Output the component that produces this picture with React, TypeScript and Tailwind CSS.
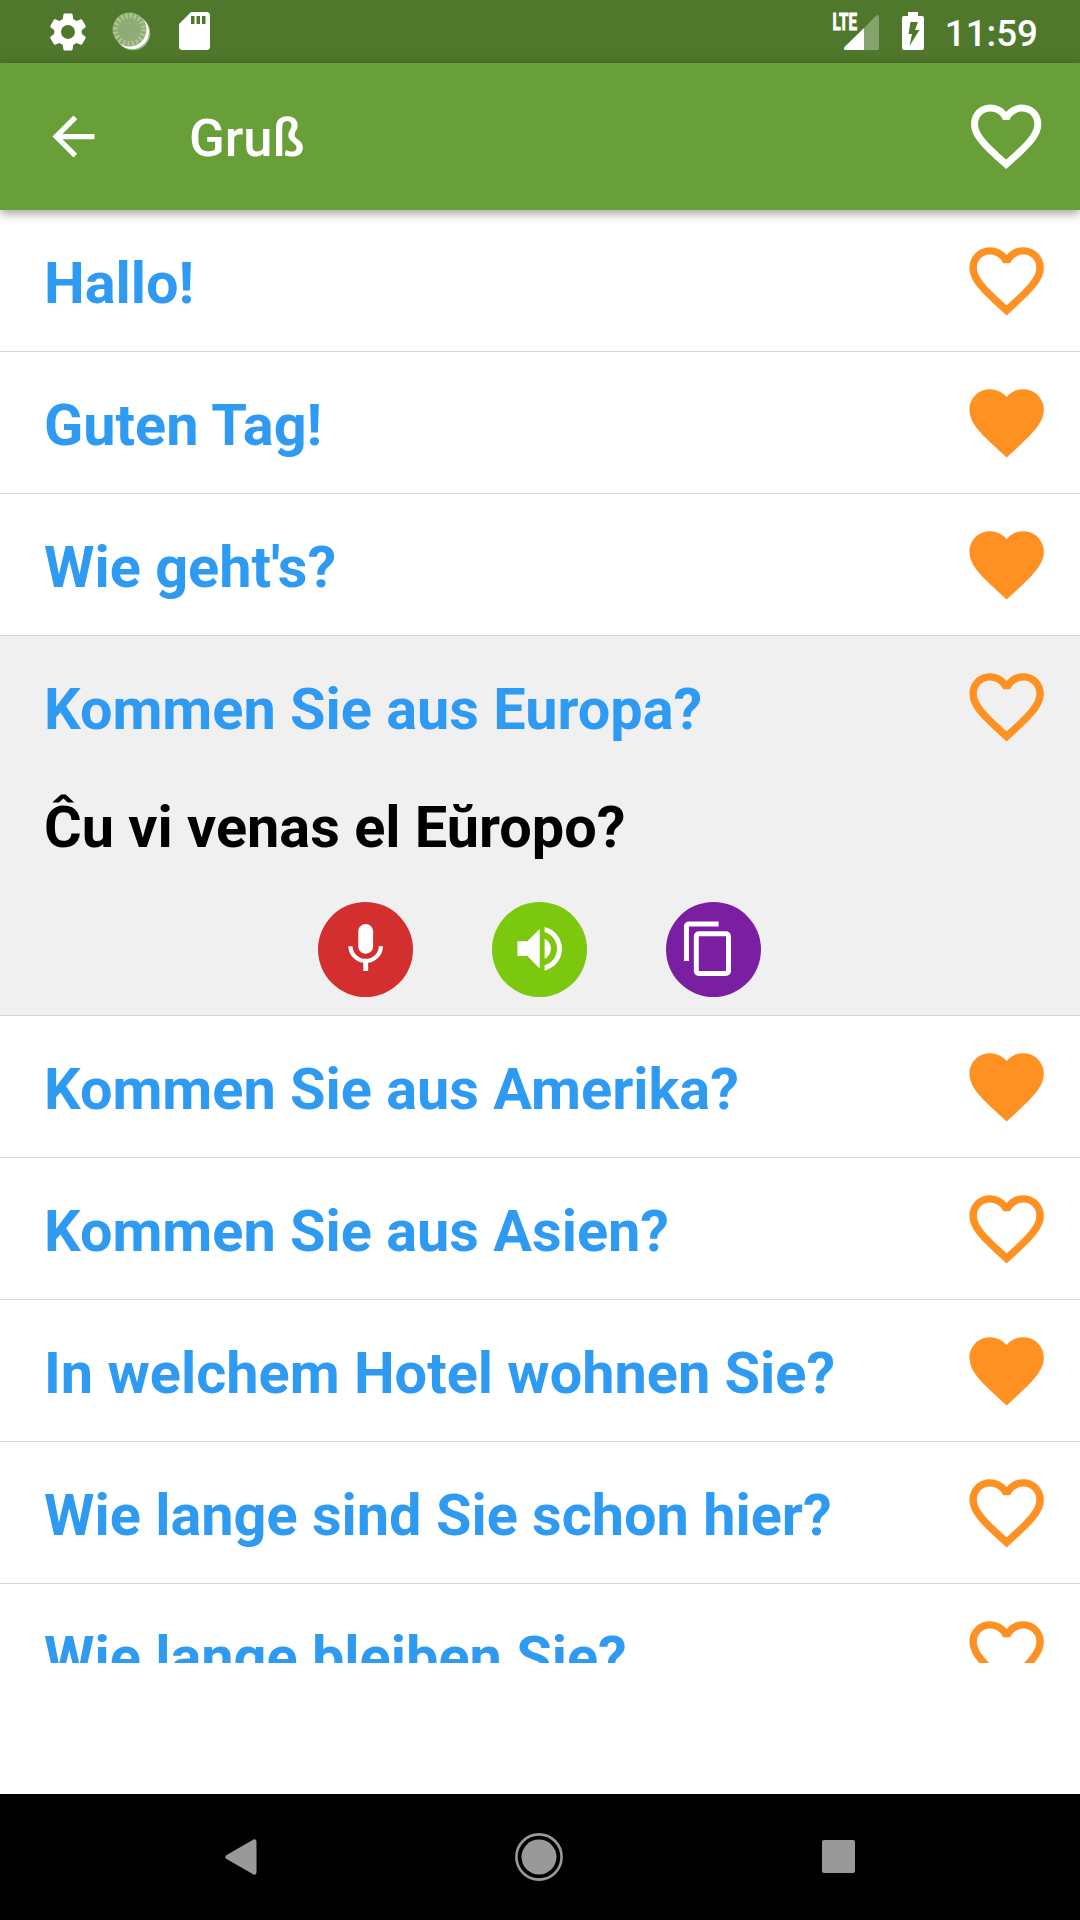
import { MdArrowBack, MdFavorite, MdFavoriteBorder, MdMic, MdVolumeUp, MdContentCopy, MdSettings } from "react-icons/md";

type Phrase = {
  text: string;
  favorite: boolean;
  translation?: string;
};

const PHRASES: Phrase[] = [
  { text: "Hallo!", favorite: false },
  { text: "Guten Tag!", favorite: true },
  { text: "Wie geht's?", favorite: true },
  { text: "Kommen Sie aus Europa?", favorite: false, translation: "Ĉu vi venas el Eŭropo?" },
  { text: "Kommen Sie aus Amerika?", favorite: true },
  { text: "Kommen Sie aus Asien?", favorite: false },
  { text: "In welchem Hotel wohnen Sie?", favorite: true },
  { text: "Wie lange sind Sie schon hier?", favorite: false },
  { text: "Wie lange bleiben Sie?", favorite: false },
];

function StatusBar() {
  return (
    <div className="flex h-[63px] shrink-0 items-center bg-[#50782c] pb-px pl-[45px] pr-[42px] text-white">
      <MdSettings className="mt-px h-[46px] w-[46px]" />
      <svg viewBox="0 0 40 40" className="ml-[21px] h-10 w-10">
        <circle cx="21" cy="22" r="17.3" fill="#9fb68b" />
        <circle cx="20" cy="21" r="17" fill="#fff" />
        <circle cx="17.500" cy="18.500" r="17" fill="#8fab78" />
        <circle cx="17.500" cy="18.500" r="14" fill="none" stroke="#b4c98f" strokeWidth="5" strokeDasharray="1.8 2.6" />
      </svg>
      <svg viewBox="0 0 31 38" className="ml-[27px] h-[38px] w-[31px]" fill="currentColor">
        <path fillRule="evenodd" d="M12 0h15.500a3.500 3.500 0 0 1 3.500 3.500v31a3.500 3.500 0 0 1-3.500 3.500h-24A3.500 3.500 0 0 1 0 34.500V12zM12 4v8h3.500V4zM17.500 4v8H21V4zM23 4v8h3.500V4z" />
      </svg>
      <div className="flex-1" />
      <svg viewBox="0 0 48 40" className="h-10 w-12 overflow-visible">
        <path d="M46 6v31a2 2 0 0 1-2 2H31V17L43 4.800Q46 2.500 46 6z" fill="#86a26d" />
        <path d="M31 17v22H13q-3.500-.500-1.500-3z" fill="#fff" />
        <text x="-0.500" y="19" textLength="24.500" lengthAdjust="spacingAndGlyphs" fill="#fff" stroke="#fff" strokeWidth="0.900" className="font-[Roboto] text-[23px] font-bold">LTE</text>
      </svg>
      <svg viewBox="0 0 22 38" className="ml-[21px] h-[38px] w-[22px]" fill="currentColor">
        <path fillRule="evenodd" d="M6 0h10v4h4a2 2 0 0 1 2 2v30a2 2 0 0 1-2 2H2a2 2 0 0 1-2-2V6a2 2 0 0 1 2-2h4zM8.500 10L6.500 22H10l-2.500 12L17.500 18H13l3-8z" />
      </svg>
      <span className="ml-[21px] mt-[6px] text-[36.75px] font-medium leading-none">11:59</span>
    </div>
  );
}

function AppBar() {
  return (
    <header className="relative z-10 flex h-[147px] shrink-0 items-center bg-[#689f38] pl-[42px] pr-[32px] text-white shadow-[0_3px_10px_rgba(0,0,0,0.4)]">
      <MdArrowBack className="h-[63px] w-[63px]" />
      <h1 className="ml-[84px] flex-1 pt-[4px] text-[52.500px] font-medium leading-none">Gruß</h1>
      <MdFavoriteBorder className="h-[84.400px] w-[84.400px]" />
    </header>
  );
}

function PhraseRow({ text, favorite, translation }: Phrase) {
  const Heart = favorite ? MdFavorite : MdFavoriteBorder;
  return (
    <li className={translation ? "border-b border-[#d5d5d5] bg-[#f0f0f0]" : "border-b border-[#d5d5d5] bg-white"}>
      <div className="flex h-[141px] items-center justify-between pl-[44px] pr-[29px]">
        <span className="whitespace-nowrap pt-[7px] text-[57.650px] font-bold leading-none text-[#2f9af2]">{text}</span>
        <Heart className="mt-px h-[89.250px] w-[89.250px] text-[#ff9122]" />
      </div>
      {translation && (
        <div className="h-[238px]">
          <p className="pl-[44px] pt-[22px] text-[57.650px] font-bold leading-[58px] text-black">{translation}</p>
          <div className="mt-[45px] flex justify-center gap-[79px] pr-[2px] text-white">
            <button className="flex h-[95px] w-[95px] items-center justify-center rounded-full bg-[#d32f2f]">
              <MdMic className="mb-px ml-px h-[59.400px] w-[59.400px]" />
            </button>
            <button className="flex h-[95px] w-[95px] items-center justify-center rounded-full bg-[#7cc80e]">
              <MdVolumeUp className="mb-px ml-px h-[59.400px] w-[59.400px]" />
            </button>
            <button className="flex h-[95px] w-[95px] items-center justify-center rounded-full bg-[#7b1fa2]">
              <MdContentCopy className="mb-px mr-[9px] h-[59.400px] w-[59.400px] shrink-0" />
            </button>
          </div>
        </div>
      )}
    </li>
  );
}

function NavBar() {
  return (
    <nav className="flex h-[126px] shrink-0 items-center justify-between bg-black pb-px pl-[225px] pr-[225px] text-[#999]">
      <svg viewBox="0 0 32 36" className="h-9 w-8" fill="currentColor">
        <path d="M1.200 16.200L28.500.600Q31.500-.500 31.500 3v30q0 3.500-3 2.400L1.200 19.800q-2-1.800 0-3.600z" />
      </svg>
      <svg viewBox="0 0 48 48" className="mr-px h-12 w-12">
        <circle cx="24" cy="24" r="22.600" fill="none" stroke="currentColor" strokeWidth="2.600" />
        <circle cx="24" cy="24" r="17.500" fill="currentColor" />
      </svg>
      <div className="h-[33px] w-[33px] rounded-[2px] bg-[#999]" />
    </nav>
  );
}

export default function App() {
  return (
    <div className="flex h-[1920px] w-[1080px] flex-col overflow-hidden bg-white font-[Roboto,sans-serif]">
      <StatusBar />
      <AppBar />
      <ul className="h-[1453px] shrink-0 overflow-hidden">
        {PHRASES.map((p) => (
          <PhraseRow key={p.text} {...p} />
        ))}
      </ul>
      {/* ad slot */}
      <div className="flex-1 bg-white" />
      <NavBar />
    </div>
  );
}
